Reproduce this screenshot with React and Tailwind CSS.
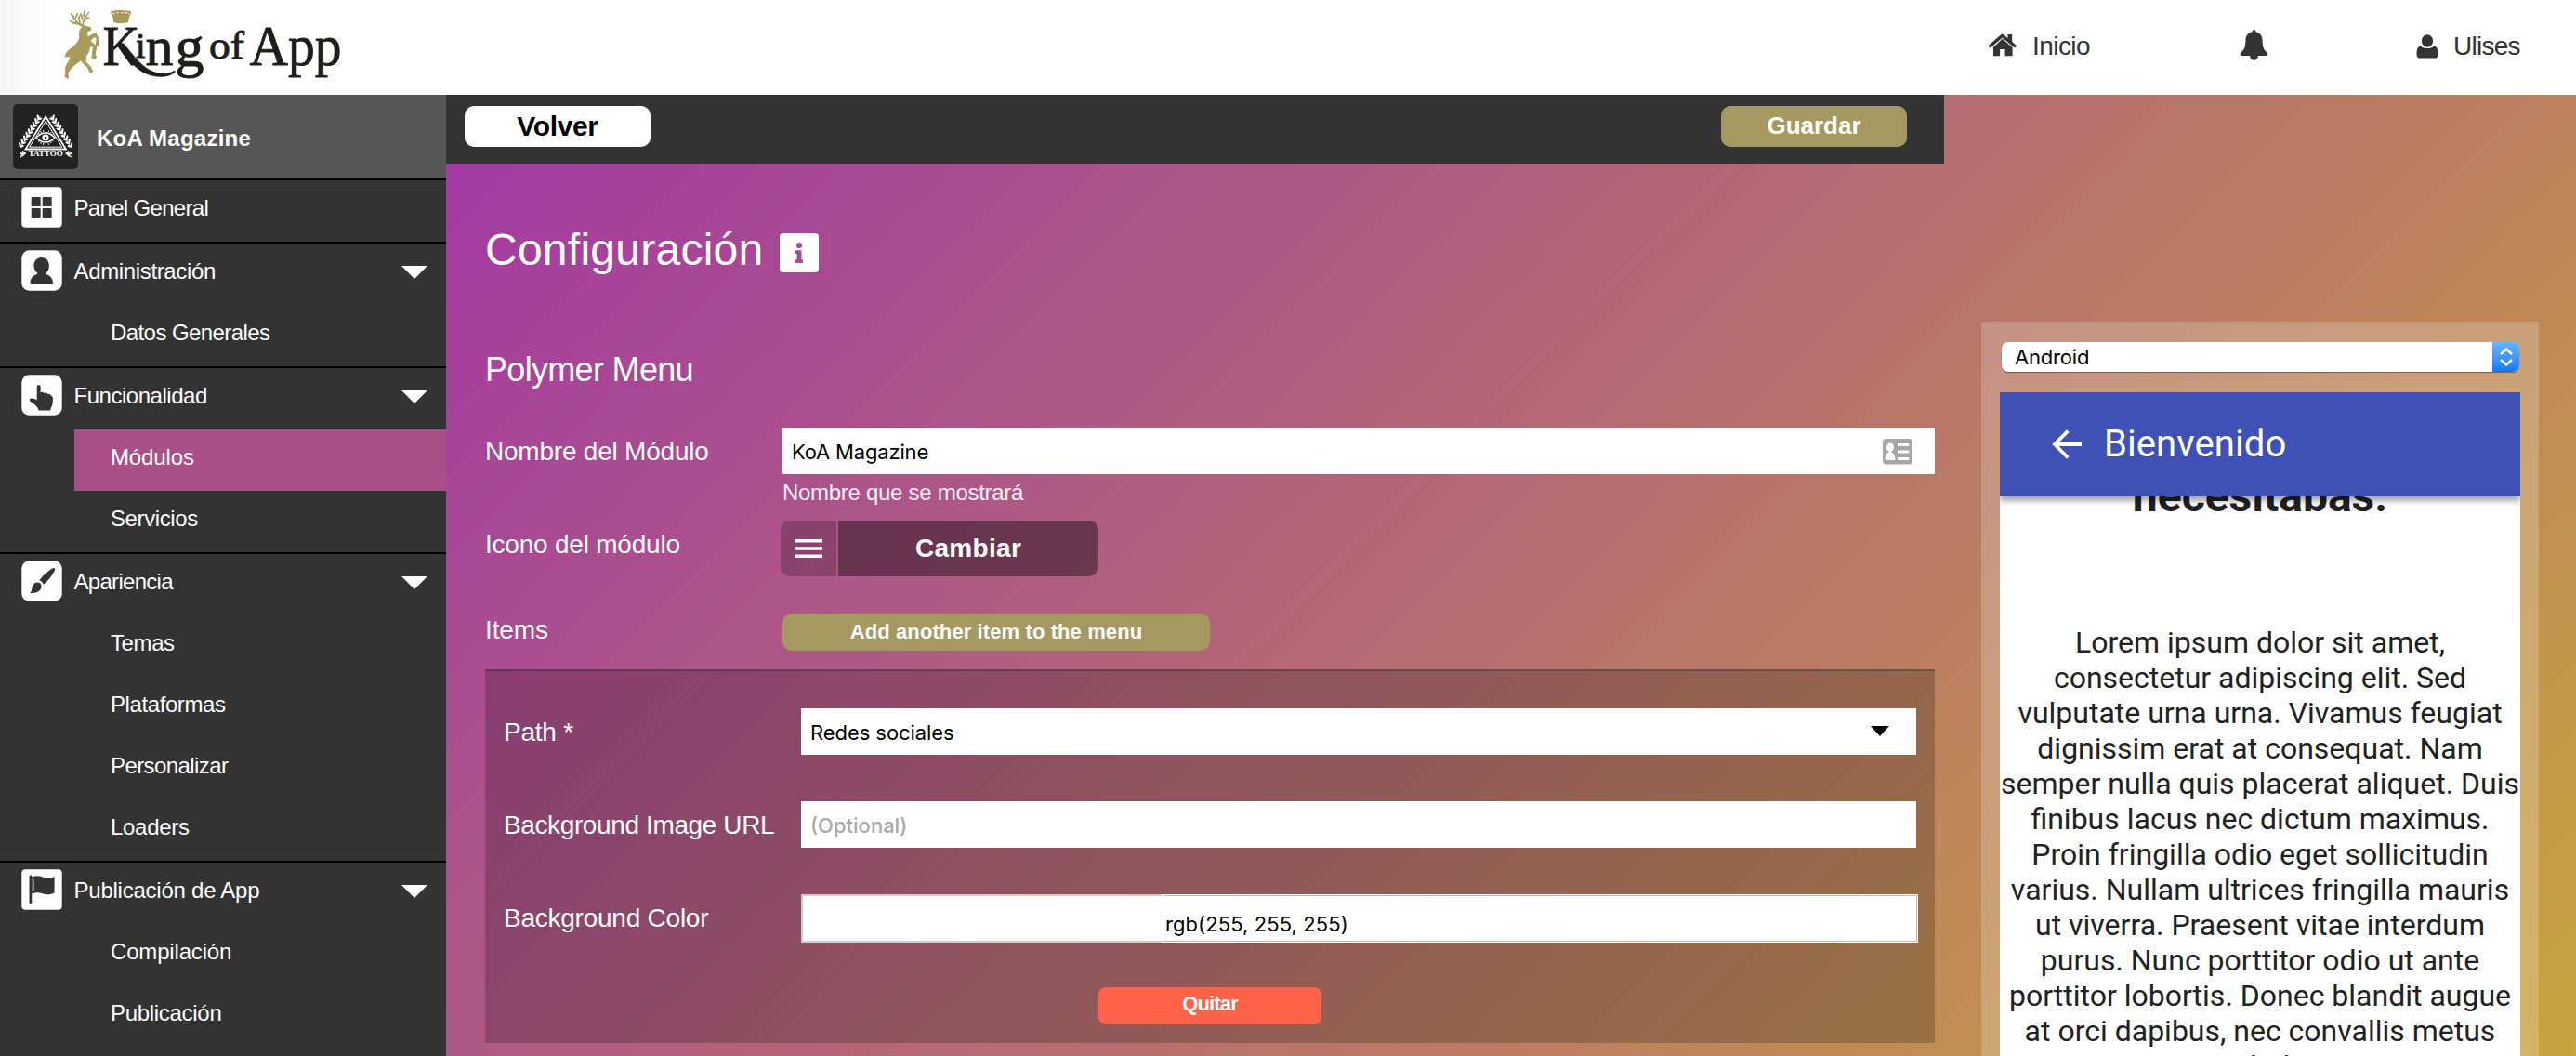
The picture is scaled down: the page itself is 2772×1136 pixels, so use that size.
import React from "react";
import { FaInfo } from "react-icons/fa";

const GOLD = "#a99a5b";

function Logo() {
  return (
    <svg className="ml-[66px] h-[96px] w-[310px]" viewBox="66 0 310 96" fill="#1d1d1b" fontFamily="Liberation Serif, serif">
      <g transform="scale(0.3333)" fill={GOLD} stroke="none">
        <path
          d="M272 84L262 78L266 89C257 93 257 102 257 115C257 130 248 142 236 152C222 160 214 170 210 183L226 182C228 190 222 200 215 209C209 222 213 236 210 248L220 253L219 237C224 224 236 212 249 203L262 194C267 204 275 212 283 216L291 235L299 231C295 217 285 207 276 200C279 192 280 188 277 182C285 172 289 162 290 149L301 151L298 180L296 186L307 190L311 181L306 176L312 150L300 140C296 138 294 134 291 131L305 119L312 124L311 146L318 148C320 134 316 118 310 109L299 111L284 120C281 112 279 106 283 100L293 98L293 89Z"
          stroke={GOLD}
          strokeWidth="3"
          strokeLinejoin="round"
        />
        <path
          d="M268 86C254 74 240 78 226 68M256 78C248 66 238 64 232 50M246 72L237 77M242 62L250 44M238 54L230 44M268 82C266 66 274 60 287 40M266 64L262 44M272 60L288 57M270 54L272 36M260 78L254 56L262 46"
          fill="none"
          stroke={GOLD}
          strokeWidth="4.5"
          strokeLinecap="round"
        />
        <path d="M357 38q6-5 12-3q6-4 11-1q6-3 11 0q6-3 11 1q6-3 11 0q6-1 11 4l-4 11l-3 4l-3 18q-23 8-47 0l-3-18l-4-6z" />
        <path d="M364 43l7 2M377 41l7 1M391 41h7M404 42l7-1M414 45l5-1" stroke="#fff" strokeWidth="3" />
      </g>
      <g stroke="#1d1d1b" strokeWidth="0.9" strokeLinejoin="round">
        <text x="110.500" y="69.700" fontSize="62" textLength="40" lengthAdjust="spacingAndGlyphs">K</text>
        <path d="M127 49C136 61 144 72 154 77.500C166 84 182 84 188.500 77L187 76.500C180 81 169 80 160 75C150 69 142 58 133 47Z" />
        <text x="146" y="61.700" fontSize="38">i</text>
        <text x="156.500" y="69.700" fontSize="59" textLength="30" lengthAdjust="spacingAndGlyphs">n</text>
        <text x="188.500" y="70.500" fontSize="61" textLength="31" lengthAdjust="spacingAndGlyphs">g</text>
        <text x="225" y="62.500" fontSize="43" textLength="38" lengthAdjust="spacingAndGlyphs">of</text>
        <text x="268.500" y="69.700" fontSize="62" textLength="99" lengthAdjust="spacingAndGlyphs">App</text>
      </g>
    </svg>
  );
}

function HomeIcon() {
  return (
    <svg className="h-[25px] w-[30px]" viewBox="0 0 30 25" fill="#333">
      <path d="M1.700 13.500L14.700 2.400L28 13.500" fill="none" stroke="#333" strokeWidth="3.400" strokeLinecap="round" strokeLinejoin="round" />
      <path d="M20.500 1h4.700v9l-4.700-4z" />
      <path d="M14.700 5.800L25.600 15v9.200h-8V17h-5.500v7.200H5V15z" />
    </svg>
  );
}

function BellIcon() {
  return (
    <svg className="h-[33px] w-[31px]" viewBox="0 0 30 33" fill="#333">
      <path d="M15 0c1.400 0 2 1 2 2.200 4.500 1 6.800 4.200 7 8.600.3 7 .8 10.600 4.800 13.400 1.500 1.200 1.400 3.800-.5 3.800h-8.900c-.2 2.900-1.600 4.800-4.400 4.800s-4.200-1.900-4.400-4.800H1.700c-1.900 0-2-2.600-.5-3.800C5.200 21.400 5.700 17.800 6 10.800c.2-4.400 2.500-7.600 7-8.600C13 1 13.600 0 15 0z" />
    </svg>
  );
}

function UserIcon() {
  return (
    <svg className="h-[26px] w-[24px]" viewBox="0 0 24 26" fill="#333">
      <path d="M4.500 12.500c2 2 4.500 2.500 7.500 2.500s5.500-.5 7.500-2.500c3 1 4 4 4 7.500 0 3.200-.5 5.500-3 5.500H3.500c-2.500 0-3-2.300-3-5.500 0-3.500 1-6.500 4-7.500z" />
      <ellipse cx="12" cy="7" rx="6.600" ry="7.200" stroke="#fff" strokeWidth="1" />
    </svg>
  );
}

function TattooLogo() {
  const leaves = Array.from({ length: 9 }, (_, i) => i / 8);
  return (
    <svg className="h-[70px] w-[70px] rounded-[5px] bg-[#222]" viewBox="0 0 70 70" fill="#fff">
      <path d="M35.200 13.500L13.500 48.500H57Z" fill="none" stroke="#fff" strokeWidth="1.800" />
      <path d="M35.200 18.500L17.600 46.200H52.800Z" fill="none" stroke="#fff" strokeWidth="1" />
      {[0, 1].map((side) => (
        <g key={side} transform={side ? "translate(70.400 0) scale(-1 1)" : undefined}>
          <path d="M29.500 13L9 45" stroke="#fff" strokeWidth="0.800" />
          {leaves.map((t) => (
            <g key={t} transform={`translate(${29 - 19.500 * t} ${14 + 29.500 * t})`}>
              <ellipse cx="-2" cy="-0.500" rx="1.200" ry="2.800" transform="rotate(-12)" />
              <ellipse cx="1.800" cy="0.800" rx="1.100" ry="2.600" transform="rotate(72)" />
            </g>
          ))}
          <path d="M7 53l4 1-3 3M7 53l7 0M10 50.500l3 2.500-3 3" fill="none" stroke="#fff" strokeWidth="1.400" />
        </g>
      ))}
      <ellipse cx="35" cy="36" rx="8.300" ry="7.200" fill="none" stroke="#fff" strokeWidth="2" strokeDasharray="0.900 1.900" />
      <path d="M25 36q10-10 20 0q-10 10-20 0z" fill="#222" stroke="#fff" strokeWidth="1.300" />
      <circle cx="35" cy="36" r="3.600" />
      <circle cx="35" cy="36" r="1.200" fill="#222" />
      <text x="16.700" y="56" fontSize="7.800" fontWeight="bold" fontFamily="Liberation Serif, serif" textLength="37" lengthAdjust="spacingAndGlyphs">TATTOO</text>
    </svg>
  );
}

const glyphs = {
  grid: (
    <g>
      <rect x="10.700" y="11" width="10" height="10" rx="1" />
      <rect x="22.700" y="11" width="10" height="10" rx="1" />
      <rect x="10.700" y="23" width="10" height="10" rx="1" />
      <rect x="22.700" y="23" width="10" height="10" rx="1" />
    </g>
  ),
  person: (
    <path d="M21.700 8c5 0 8.200 3.800 8.200 9 0 3.600-1.700 6.500-3.700 8v.8c3.500 1.200 7.800 4 7.800 9.200 0 1.300-.4 1.700-1.500 1.700H11c-1 0-1.500-.4-1.500-1.700 0-5.200 4.300-8 7.800-9.200V25c-2-1.500-3.800-4.400-3.800-8 0-5.200 3.200-9 8.200-9z" />
  ),
  hand: (
    <path d="M16.700 13c0-2.700 3.900-2.700 3.900 0v6.300c1-1 3-.8 3.800.7 1.200-.8 3.100-.4 3.800 1 1.400-.5 2.900 0 3.500 1.400 1.400.3 2.200 1.500 2.200 3.500 0 4.500-.3 6.500-1.900 9.500l-1 3.100H18.500l-.8-2.500c-2.200-3.500-4.700-5-7.500-6.700-2-1.300-1.600-4 .7-3.800 2 .1 3.900.8 5.800 1.800z" />
  ),
  brush: (
    <g>
      <path d="M35.800 8.200c.9.900-.2 3.700-3 7.700-3 4.200-5.700 7-9 9.800-.8-2-2.300-3.600-4.500-4.500 3-4 6.500-7.300 10-10 3.500-2.500 5.700-3.800 6.500-3z" />
      <path d="M17.800 23.500c2.700.3 4.400 2.700 3.600 5.700-1 4-5 6-12.400 5.800 1.600-1 2-2.500 2.400-5 .5-3.800 3-6.900 6.400-6.500z" />
    </g>
  ),
  flag: (
    <g>
      <rect x="8.500" y="6.500" width="2.800" height="30.500" rx="1.200" />
      <path d="M11.300 8.500c4-1.800 8-1.500 11.700 0 4.500 1.700 8 1.500 12.600-.5v17.300c-4.500 2.500-8.600 2.500-13.100.9-3.500-1.200-7.200-1.200-11.200.4z" />
      <path d="M12.800 11v13" stroke="#fff" strokeWidth="1.200" />
    </g>
  ),
};

function MenuIcon({ name }) {
  return (
    <svg className="mt-[7px] ml-[23px] h-[44px] w-[44px]" viewBox="0 0 44 44" fill="#333">
      <rect x="0.300" y="0.300" width="43.400" height="43.400" rx={name === "grid" || name === "flag" ? 4 : 8} fill="#fff" />
      {glyphs[name]}
    </svg>
  );
}

const menu = [
  { icon: "grid", label: "Panel General", track: "tracking-[-0.68px]", items: [] },
  {
    icon: "person",
    label: "Administración",
    track: "tracking-[-0.35px]",
    items: [{ label: "Datos Generales", track: "tracking-[-0.58px]" }],
  },
  {
    icon: "hand",
    label: "Funcionalidad",
    track: "tracking-[-0.47px]",
    items: [
      { label: "Módulos", track: "tracking-[-0.12px]", active: true },
      { label: "Servicios", track: "tracking-[-0.4px]" },
    ],
  },
  {
    icon: "brush",
    label: "Apariencia",
    track: "tracking-[-0.7px]",
    items: [
      { label: "Temas", track: "tracking-[-0.4px]" },
      { label: "Plataformas", track: "tracking-[-0.41px]" },
      { label: "Personalizar", track: "tracking-[-0.58px]" },
      { label: "Loaders", track: "tracking-[-0.3px]" },
    ],
  },
  {
    icon: "flag",
    label: "Publicación de App",
    track: "tracking-[-0.24px]",
    items: [
      { label: "Compilación", track: "tracking-[-0.17px]" },
      { label: "Publicación", track: "tracking-[-0.3px]" },
    ],
  },
];

function Sidebar() {
  return (
    <aside className="flex h-full w-[480px] shrink-0 flex-col bg-[#333] text-[24px] leading-[60px] text-white">
      <div className="flex h-[90px] shrink-0 items-center bg-[#565656] pl-[14px]">
        <TattooLogo />
        <span className="ml-[20px] pt-[4px] font-bold tracking-[0.25px]">KoA Magazine</span>
      </div>
      {menu.map((section) => (
        <section key={section.label} className="shrink-0 border-t-2 border-black">
          <div className="flex h-[66px]">
            <MenuIcon name={section.icon} />
            <span className={`ml-[12.500px] grow ${section.track}`}>{section.label}</span>
            {section.items.length > 0 && (
              <svg className="mt-[24px] mr-[20px] h-[14px] w-[28px]" viewBox="0 0 28 14" fill="#fff">
                <path d="M0 0h28L14 14z" />
              </svg>
            )}
          </div>
          {section.items.map((item) => (
            <div key={item.label} className={`ml-[80px] h-[66px] pl-[39px] ${item.track} ${item.active ? "bg-[#ab4f89]" : ""}`}>
              {item.label}
            </div>
          ))}
        </section>
      ))}
    </aside>
  );
}

function Label({ children, className = "" }) {
  return <label className={`w-[320px] shrink-0 text-[28px] leading-[52px] whitespace-nowrap ${className}`}>{children}</label>;
}

function Field({ children, className = "" }) {
  return (
    <div className={`flex h-[50px] grow justify-between bg-white pl-[10px] font-[Inter,sans-serif] text-[22px] leading-[52px] text-black ${className}`}>
      {children}
    </div>
  );
}

function ContactIcon() {
  return (
    <svg className="mt-[12px] mr-[24px] h-[28px] w-[32px]" viewBox="0 0 32 28">
      <rect width="32" height="27.500" rx="4" fill="#a7a7a7" />
      <g fill="#fff">
        <ellipse cx="8" cy="9.300" rx="4" ry="4.700" />
        <path d="M6.500 12h3v2.500c2.500 1 4 3.500 4 8.500H2.700c0-5 1.300-7.500 3.800-8.500z" />
        <path d="M16 5h12.200v3H16zM16 12.500h12.200v3H16zM16 20h12.200v3H16z" />
      </g>
    </svg>
  );
}

function Main() {
  return (
    <main className="w-[1612px] shrink-0 text-white">
      <div className="flex h-[74px] justify-between bg-[#333] pt-[12px] pr-[40px] pl-[20px]">
        <button className="h-[44px] w-[200px] rounded-[10px] bg-white text-[30px] leading-[44px] font-bold tracking-[-0.36px] text-black">Volver</button>
        <button className="h-[44px] w-[200px] rounded-[10px] bg-[#a59861] pb-[2px] text-[26px] leading-[42px] font-bold text-white">Guardar</button>
      </div>
      <div className="pt-[65px] pr-[10px] pl-[42px]">
        <div className="flex h-[56px]">
          <h1 className="w-[317px] text-[48px] leading-[56px] tracking-[0.25px] whitespace-nowrap">Configuración</h1>
          <span className="mt-[10px] flex h-[42px] w-[42px] items-center justify-center rounded-[4px] bg-white">
            <FaInfo className="h-[22px] w-[12px] text-[#a84793]" />
          </span>
        </div>
        <h2 className="mt-[79px] text-[36px] leading-[44px] tracking-[-0.68px]">Polymer Menu</h2>
        <div className="mt-[40px] flex">
          <Label className="tracking-[-0.22px]">Nombre del Módulo</Label>
          <div className="grow">
            <Field className="tracking-[-0.17px]">
              KoA Magazine
              <ContactIcon />
            </Field>
            <p className="h-[40px] text-[24px] leading-[40px] tracking-[-0.29px] text-white/90">Nombre que se mostrará</p>
          </div>
        </div>
        <div className="mt-[10px] flex h-[60px]">
          <Label className="tracking-[-0.22px]">Icono del módulo</Label>
          <div className="-ml-[2px] flex gap-[2px]">
            <span className="flex w-[60px] items-center justify-center rounded-l-[10px] bg-black/20">
              <svg className="h-[20px] w-[29px]" viewBox="0 0 29 20" fill="#fff">
                <path d="M0 0h29v3.500H0zM0 8.200h29v3.500H0zM0 16.500h29V20H0z" />
              </svg>
            </span>
            <button className="w-[280px] rounded-r-[10px] bg-black/40 text-[28px] leading-[60px] font-bold tracking-[0.31px]">Cambiar</button>
          </div>
        </div>
        <div className="mt-[40px] flex h-[40px]">
          <Label className="-mt-[8px] tracking-[-0.11px]">Items</Label>
          <button className="w-[460px] rounded-[10px] bg-[#a59861] text-[22px] leading-[40px] font-bold tracking-[0.1px]">Add another item to the menu</button>
        </div>
        <section className="mt-[20px] border-t-2 border-black/20 bg-black/20 bg-clip-border px-[20px] pt-[40px] pb-[20px]">
          <div className="flex h-[50px]">
            <Label className="tracking-[-0.25px]">Path *</Label>
            <Field className="tracking-[-0.07px]">
              Redes sociales
              <svg className="mt-[19px] mr-[29px] h-[11px] w-[20px]" viewBox="0 0 20 11">
                <path d="M0 0h20L10 11z" />
              </svg>
            </Field>
          </div>
          <div className="mt-[50px] flex h-[50px]">
            <Label className="tracking-[-0.38px]">Background Image URL</Label>
            <Field className="font-medium text-[#a9a9a9]!">(Optional)</Field>
          </div>
          <div className="mt-[50px] flex h-[52px]">
            <Label className="tracking-[-0.24px]">Background Color</Label>
            <div className="-mr-[2px] flex grow font-[Inter,sans-serif] text-[22px] text-black">
              <span className="w-[388px] border-2 border-r-0 border-[#ccc] bg-white" />
              <span className="grow bg-white p-px">
                <span className="block h-[50px] border border-[#bbb] pl-[2px] leading-[60px] tracking-[0.08px]">rgb(255, 255, 255)</span>
              </span>
            </div>
          </div>
          <button className="mx-auto mt-[48px] block h-[40px] w-[240px] rounded-[8px] bg-[#ff6347] pb-[4px] text-[22px] leading-[36px] font-bold tracking-[-0.84px]">Quitar</button>
        </section>
      </div>
    </main>
  );
}

const lorem = [
  "Lorem ipsum dolor sit amet,",
  "consectetur adipiscing elit. Sed",
  "vulputate urna urna. Vivamus feugiat",
  "dignissim erat at consequat. Nam",
  "semper nulla quis placerat aliquet. Duis",
  "finibus lacus nec dictum maximus.",
  "Proin fringilla odio eget sollicitudin",
  "varius. Nullam ultrices fringilla mauris",
  "ut viverra. Praesent vitae interdum",
  "purus. Nunc porttitor odio ut ante",
  "porttitor lobortis. Donec blandit augue",
  "at orci dapibus, nec convallis metus",
  "vestibulum",
];

function Preview() {
  return (
    <aside className="mt-[244px] ml-[40px] flex h-[790px] w-[600px] shrink-0 flex-col bg-white/20 px-[20px] pt-[22px]">
      <div className="ml-[2px] flex h-[32px] w-[557px] shrink-0 justify-between overflow-hidden rounded-[7px] bg-white font-[Inter,sans-serif] text-[22px] leading-[32px] tracking-[-0.18px] shadow-[0_1px_1px_rgba(0,0,0,0.4)]">
        <span className="pl-[14px]">Android</span>
        <span className="flex w-[29px] items-center justify-center bg-linear-to-b from-[#6cb3fa] to-[#067aff]">
          <svg className="h-[20px] w-[14px]" viewBox="0 0 14 20" fill="none" stroke="#fff" strokeWidth="2.400">
            <path d="M1 7l6-5.500L13 7M1 13l6 5.500 6-5.500" />
          </svg>
        </span>
      </div>
      <div className="mt-[22px] flex h-[714px] flex-col overflow-hidden bg-white font-[Roboto,sans-serif] text-[#212121]">
        <header className="z-10 flex h-[112px] shrink-0 items-center bg-[#3f51b5] text-white shadow-[0_5px_6px_rgba(0,0,0,0.35)]">
          <svg className="ml-[56px] h-[32px] w-[32px]" viewBox="0 0 32 32" fill="none" stroke="#fff" strokeWidth="3.800">
            <path d="M32 16H3.500M17.300 1.700L3 16l14.300 14.300" />
          </svg>
          <span className="ml-[24px] text-[40px] leading-[112px] tracking-[0.08px]">Bienvenido</span>
        </header>
        <p className="-mt-[30px] h-[60px] shrink-0 text-center text-[48px] leading-[60px] font-bold">necesitabas.</p>
        <div className="mt-[108px] text-center text-[32px] leading-[38px] whitespace-nowrap">
          {lorem.map((line) => (
            <p key={line}>{line}</p>
          ))}
        </div>
      </div>
    </aside>
  );
}

export default function App() {
  return (
    <div className="flex h-[1136px] w-[2772px] flex-col overflow-hidden font-['Liberation_Sans',Arial,sans-serif]">
      <header className="flex h-[102px] shrink-0 justify-between bg-white bg-linear-to-r from-[#f5f5f5] to-white to-[60px]">
        <Logo />
        <nav className="flex w-[632px] text-[28px] leading-[100px] text-[#333]">
          <div className="flex w-[270px]">
            <span className="mt-[36px]"><HomeIcon /></span>
            <span className="ml-[17px] tracking-[-0.56px]">Inicio</span>
          </div>
          <div className="w-[190px] pt-[32px]"><BellIcon /></div>
          <div className="flex">
            <span className="mt-[37px]"><UserIcon /></span>
            <span className="ml-[16px] tracking-[-0.73px]">Ulises</span>
          </div>
        </nav>
      </header>
      <div className="flex h-[1034px]">
        <Sidebar />
        <div className="flex grow bg-[linear-gradient(135deg,#a337a5,#c8a43c)]">
          <Main />
          <Preview />
        </div>
      </div>
    </div>
  );
}
